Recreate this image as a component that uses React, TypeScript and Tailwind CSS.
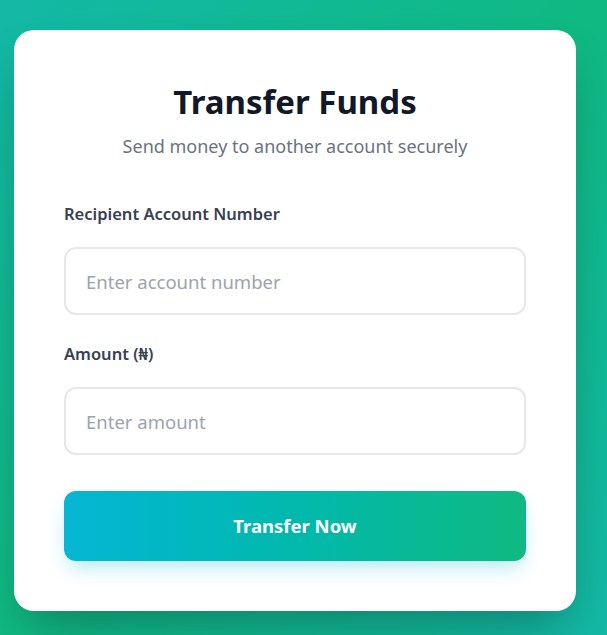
export default function App() {
  return (
    <div
      className="min-h-screen bg-gradient-to-br from-[#14b8a6] via-[#10b981] to-[#14b8a6] pt-[30px] pb-6 pl-[14px]"
      style={{ fontFamily: '"Noto Sans", "Open Sans", sans-serif' }}
    >
      <div className="w-[562px] rounded-[20px] bg-white px-[50px] pt-[50px] pb-[50px] shadow-[0_25px_50px_-12px_rgba(0,0,0,0.3)]">
        <div className="text-center">
          <h1 className="text-[33px] leading-[44px] font-bold text-[#111827]">Transfer Funds</h1>
          <p className="mt-[8px] text-[18px] leading-[28px] text-[#6b7280]">Send money to another account securely</p>
        </div>

        <form className="mt-[42px] flex flex-col" onSubmit={(e) => e.preventDefault()}>
          <label className="text-[16.5px] leading-[24px] font-semibold text-[#374151]">Recipient Account Number</label>
          <input
            type="text"
            placeholder="Enter account number"
            className="mt-[21px] h-[68px] w-full rounded-xl border-2 border-[#e5e7eb] px-5 text-[18.5px] text-gray-800 outline-none placeholder:text-[#9ca3af]"
          />

          <label className="mt-[27px] text-[16.5px] leading-[24px] font-semibold text-[#374151]">Amount (₦)</label>
          <input
            type="text"
            placeholder="Enter amount"
            className="mt-[21px] h-[68px] w-full rounded-xl border-2 border-[#e5e7eb] px-5 text-[18.5px] text-gray-800 outline-none placeholder:text-[#9ca3af]"
          />

          <button
            type="submit"
            className="mt-[36px] h-[70px] w-full rounded-xl bg-gradient-to-r from-[#06b6d4] to-[#10b981] text-[18.5px] font-bold text-white shadow-[0_10px_20px_-4px_rgba(6,182,212,0.3)]"
          >
            Transfer Now
          </button>
        </form>
      </div>
    </div>
  );
}
